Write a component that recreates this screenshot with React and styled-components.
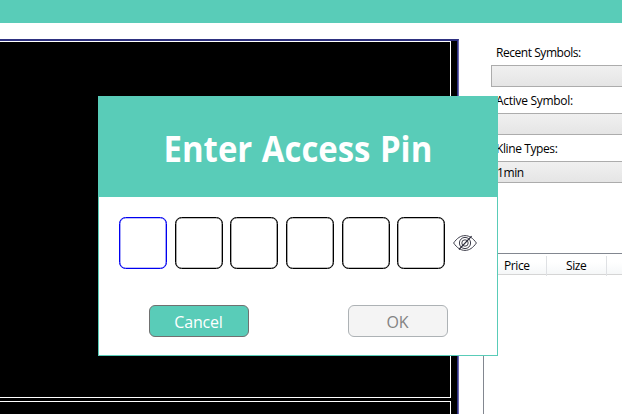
import React from "react";
import styled, { createGlobalStyle } from "styled-components";

const TEAL = "#59ccb8";

const GlobalStyle = createGlobalStyle`
  * { box-sizing: border-box; }
  body { margin: 0; background: #fff; overflow: hidden; font-family: "Open Sans", "Noto Sans", sans-serif; }
`;

const Window = styled.div`
  position: relative;
  display: flex;
  flex-direction: column;
  width: 622px;
  height: 414px;
  overflow: hidden;
  background: #fff;
`;

const TitleBar = styled.div`
  flex: 0 0 23px;
  background: ${TEAL};
`;

const Workspace = styled.div`
  display: flex;
  flex: 1;
  min-height: 0;
  padding-top: 16px;
`;

const ChartArea = styled.div`
  flex: 0 0 459px;
  display: flex;
  flex-direction: column;
  gap: 3px;
  padding-right: 7px;
  border-top: 2px solid #2e3180;
  border-right: 1px solid #6c68ae;
  box-shadow: inset -1px 0 0 #2e3180;
  background: #000;
`;

const ChartPane = styled.div`
  flex: ${(p) => (p.$height ? `0 0 ${p.$height}px` : "1")};
  border-top: 1px solid #fff;
  border-right: 1px solid #fff;
  border-bottom: ${(p) => (p.$height ? "1px solid #fff" : "none")};
`;

const Sidebar = styled.div`
  flex: 1;
  display: flex;
  flex-direction: column;
  min-width: 0;
  margin-left: 24px;
`;

const Field = styled.div`
  flex: 0 0 48px;
  padding-left: 8px;
`;

const Label = styled.div`
  height: 26px;
  padding-left: 5px;
  font-size: 12px;
  line-height: 28px;
  letter-spacing: ${(p) => p.$spacing}px;
  color: #000;
`;

const Combo = styled.div`
  height: 22px;
  padding-left: 5px;
  border: 1px solid #acacac;
  border-right: 0;
  background: linear-gradient(#f0f0f0, #e5e5e5);
  font-size: 12px;
  line-height: 22px;
  letter-spacing: -0.4px;
`;

const Table = styled.div`
  flex: 1;
  margin-top: 70px;
  border-left: 1px solid #828790;
  border-top: 1px solid #828790;
`;

const TableHead = styled.div`
  display: grid;
  grid-template-columns: 63px 60px 1fr;
  height: 21px;
  padding-top: 2px;
  border-bottom: 1px solid #d5d5d5;
  background: linear-gradient(#fff 40%, #f5f7f8);
`;

const HeadCell = styled.div`
  padding-left: ${(p) => p.$inset}px;
  border-right: 1px solid #dfe1e4;
  font-size: 12px;
  line-height: 20px;
  letter-spacing: -0.4px;
`;

const Dialog = styled.div`
  position: absolute;
  left: 98px;
  top: 96px;
  width: 400px;
  height: 260px;
  display: flex;
  flex-direction: column;
  border: 1px solid ${TEAL};
  background: #fff;
`;

const DialogHeader = styled.div`
  flex: 0 0 100px;
  display: flex;
  align-items: center;
  justify-content: center;
  background: ${TEAL};
`;

const DialogTitle = styled.h1`
  margin: 3px 0 0;
  color: #fff;
  font: bold 35px/48px "Open Sans", sans-serif;
  white-space: nowrap;
  word-spacing: 1px;
  transform: scaleX(0.94);
`;

const PinRow = styled.div`
  display: flex;
  align-items: center;
  height: 52px;
  margin: 20px 0 0 20px;
`;

const PinBox = styled.div`
  flex: 0 0 48px;
  height: 52px;
  margin-right: 7.67px;
  border: 1px solid ${(p) => (p.$active ? "#0000f0" : "#000")};
  box-shadow: inset 0 0 0 0.35px ${(p) => (p.$active ? "#0000f0" : "#000")};
  border-radius: 6.5px;
`;

const Eye = styled.svg`
  flex: 0 0 24px;
  height: 18px;
`;

const Actions = styled.div`
  display: flex;
  gap: 99px;
  margin: 36px 0 0 50px;
`;

const Button = styled.button`
  width: 100px;
  height: 32px;
  padding: 1px 1px 0 0;
  border: 1px solid ${(p) => (p.disabled ? "#adb2b5" : "#707070")};
  border-radius: 6px;
  background: ${(p) => (p.disabled ? "#f4f4f4" : TEAL)};
  color: ${(p) => (p.disabled ? "#838383" : "#fff")};
  font: 16px/28px "Open Sans", sans-serif;
  letter-spacing: -0.2px;
`;

const HiddenEyeIcon = () => (
  <Eye viewBox="0 0 24 18" fill="none" stroke="#292938" strokeWidth="0.9">
    <path d="M.6 9C4 4.2 7.6 1.6 12 1.6S20 4.2 23.4 9C20 13.8 16.4 16.4 12 16.4S4 13.8.6 9Z" />
    <circle cx="12" cy="9" r="5.6" />
    <circle cx="12" cy="9" r="3.2" />
    <path d="M6 15.5 18.6 2.2" strokeWidth="1.1" />
  </Eye>
);

export default function App() {
  return (
    <>
      <GlobalStyle />
      <Window>
        <TitleBar />
        <Workspace>
          <ChartArea>
            <ChartPane $height={357} />
            <ChartPane />
          </ChartArea>
          <Sidebar>
            <Field>
              <Label $spacing={-0.45}>Recent Symbols:</Label>
              <Combo />
            </Field>
            <Field>
              <Label $spacing={-0.3}>Active Symbol:</Label>
              <Combo />
            </Field>
            <Field>
              <Label $spacing={-0.4}>Kline Types:</Label>
              <Combo>1min</Combo>
            </Field>
            <Table>
              <TableHead>
                <HeadCell $inset={20}>Price</HeadCell>
                <HeadCell $inset={19}>Size</HeadCell>
              </TableHead>
            </Table>
          </Sidebar>
        </Workspace>
        <Dialog role="dialog">
          <DialogHeader>
            <DialogTitle>Enter Access Pin</DialogTitle>
          </DialogHeader>
          <PinRow>
            {[0, 1, 2, 3, 4, 5].map((i) => (
              <PinBox key={i} $active={i === 0} />
            ))}
            <HiddenEyeIcon />
          </PinRow>
          <Actions>
            <Button>Cancel</Button>
            <Button disabled>OK</Button>
          </Actions>
        </Dialog>
      </Window>
    </>
  );
}
